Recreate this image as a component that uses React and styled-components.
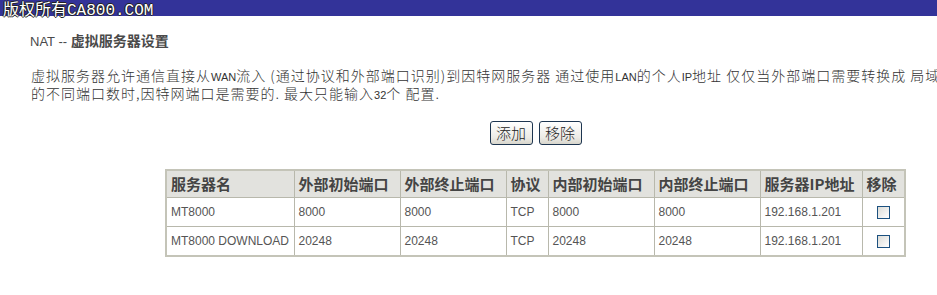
import React from 'react';
import styled, { createGlobalStyle } from 'styled-components';

const rows = [
  { name: 'MT8000', extStart: '8000', extEnd: '8000', proto: 'TCP', intStart: '8000', intEnd: '8000', ip: '192.168.1.201' },
  { name: 'MT8000 DOWNLOAD', extStart: '20248', extEnd: '20248', proto: 'TCP', intStart: '20248', intEnd: '20248', ip: '192.168.1.201' },
];

const columns = [
  { label: '服务器名', width: 128 },
  { label: '外部初始端口', width: 106 },
  { label: '外部终止端口', width: 106 },
  { label: '协议', width: 42 },
  { label: '内部初始端口', width: 106 },
  { label: '内部终止端口', width: 106 },
  { label: '服务器IP地址', width: 102 },
  { label: '移除', width: 43 },
];

const App = () => {
  return (
    <Page>
      <GlobalStyle />
      <TopBar />
      <Watermark>版权所有CA800.COM</Watermark>
      <Main>
        <Title>
          <TitleLatin>NAT -- </TitleLatin>虚拟服务器设置
        </Title>
        <Desc>
          <DescLine>
            虚拟服务器允许通信直接从<Small>WAN</Small>流入 (通过协议和外部端口识别)到因特网服务器 通过使用<Small>LAN</Small>的个人<Small>IP</Small>地址 仅仅当外部端口需要转换成 局域网
          </DescLine>
          <DescLine>
            的不同端口数时,因特网端口是需要的. 最大只能输入<Small>32</Small>个 配置.
          </DescLine>
        </Desc>
        <Actions>
          <Button type="button">添加</Button>
          <Button type="button">移除</Button>
        </Actions>
        <Table>
          <colgroup>
            {columns.map((c) => (
              <col key={c.label} style={{ width: c.width }} />
            ))}
          </colgroup>
          <thead>
            <tr>
              {columns.map((c) => (
                <Th key={c.label}>{c.label}</Th>
              ))}
            </tr>
          </thead>
          <tbody>
            {rows.map((r) => (
              <tr key={r.name}>
                <Td>{r.name}</Td>
                <Td>{r.extStart}</Td>
                <Td>{r.extEnd}</Td>
                <Td>{r.proto}</Td>
                <Td>{r.intStart}</Td>
                <Td>{r.intEnd}</Td>
                <Td>{r.ip}</Td>
                <Td $center>
                  <Check type="checkbox" />
                </Td>
              </tr>
            ))}
          </tbody>
        </Table>
      </Main>
    </Page>
  );
};

const GlobalStyle = createGlobalStyle`
  body {
    margin: 0;
    background: #ffffff;
    overflow: hidden;
    font-family: "Liberation Sans", "Noto Sans CJK SC", sans-serif;
  }
`;

const Page = styled.div`
  position: relative;
  width: 937px;
  height: 295px;
  overflow: hidden;
  background: #ffffff;
`;

const TopBar = styled.div`
  height: 16px;
  background: #333399;
`;

const Watermark = styled.div`
  position: absolute;
  left: 3px;
  top: 2px;
  font-family: "Liberation Mono", "Noto Sans CJK SC", monospace;
  font-size: 16px;
  line-height: 19px;
  color: #ffffff;
  text-shadow: 1px 0 0 #222, -1px 0 0 #222, 0 1px 0 #222, 0 -1px 0 #222;
`;

const Main = styled.div`
  width: 1071px;
`;

const Title = styled.div`
  height: 16px;
  margin: 16px 0 0 30px;
  font-family: "Noto Sans CJK SC", sans-serif;
  font-size: 14px;
  line-height: 16px;
  font-weight: 700;
  color: #4a4a4a;
`;

const TitleLatin = styled.span`
  font-family: "Liberation Sans", sans-serif;
  font-weight: 400;
  font-size: 13px;
`;

const Desc = styled.div`
  margin-top: 18px;
  padding-left: 31px;
  font-family: "Noto Sans CJK SC", sans-serif;
  font-weight: 300;
  font-size: 14px;
  letter-spacing: 1px;
  color: #333;
`;

const DescLine = styled.div`
  height: 18px;
  line-height: 18px;
  white-space: nowrap;
`;

const Small = styled.span`
  font-family: "Liberation Sans", sans-serif;
  font-size: 11px;
  letter-spacing: 0;
  line-height: 0;
`;

const Actions = styled.div`
  display: flex;
  justify-content: center;
  gap: 6px;
  margin-top: 19px;
`;

const Button = styled.button`
  width: 43px;
  height: 24px;
  padding: 0;
  border: 1px solid #1d3550;
  border-radius: 3px;
  background: linear-gradient(#ffffff, #ecebe6 70%, #d8d6cc);
  font-family: "Noto Sans CJK SC", sans-serif;
  font-size: 15px;
  font-weight: 300;
  color: #222;
  line-height: 20px;
  cursor: pointer;
`;

const Table = styled.table`
  margin: 24px auto 0;
  width: 739px;
  table-layout: fixed;
  border-collapse: collapse;
  border: 2px solid #c4c4b8;
`;

const Th = styled.th`
  height: 26px;
  padding: 0 0 0 4px;
  border: 1px solid #b8b8ac;
  background: #e2e2de;
  text-align: left;
  white-space: nowrap;
  font-family: "Noto Sans CJK SC", sans-serif;
  font-size: 15px;
  line-height: 18px;
  font-weight: 700;
  color: #444;
`;

const Td = styled.td`
  height: 28px;
  padding: 0 0 0 ${(p) => (p.$center ? 0 : 4)}px;
  border: 1px solid #b8b8ac;
  text-align: ${(p) => (p.$center ? 'center' : 'left')};
  white-space: nowrap;
  font-family: "Liberation Sans", sans-serif;
  font-size: 12px;
  color: #555;
`;

const Check = styled.input`
  appearance: none;
  display: inline-block;
  vertical-align: middle;
  width: 13px;
  height: 13px;
  margin: 0;
  border: 1px solid #1c5180;
  background: linear-gradient(135deg, #dcdcd7, #ffffff);
`;

export default App;
